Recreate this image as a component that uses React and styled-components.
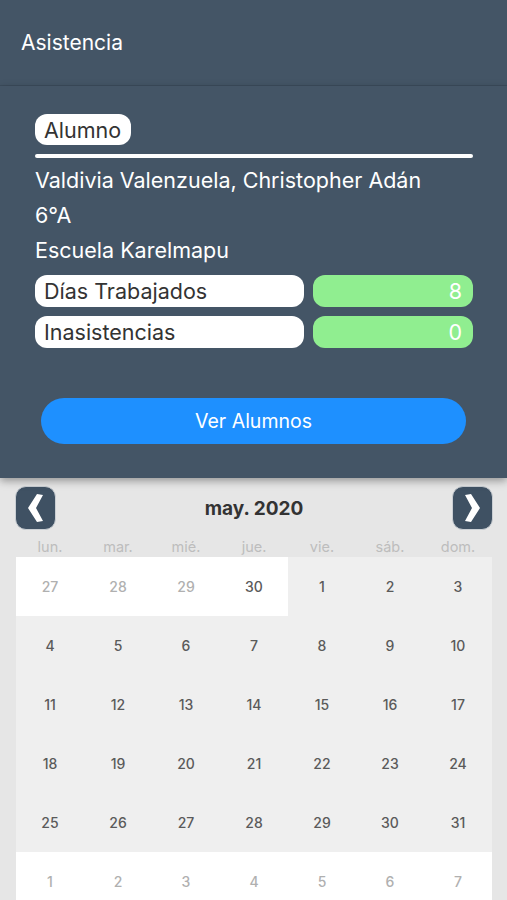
import React from "react";
import styled, { createGlobalStyle } from "styled-components";

const GlobalStyle = createGlobalStyle`
  html, body {
    margin: 0;
    padding: 0;
    background: #e6e6e6;
    font-family: Inter, "Noto Sans", "Liberation Sans", sans-serif;
  }
`;

const Page = styled.div`
  display: flex;
  flex-direction: column;
  width: 507px;
  height: 900px;
  overflow: hidden;
  & > * {
    flex-shrink: 0;
  }
`;

const TopBar = styled.header`
  height: 86px;
  display: flex;
  align-items: center;
  padding-left: 21px;
  background: #445566;
  border-bottom: 1px solid #3c4c5c;
  color: #ffffff;
  font-size: 21px;
  box-sizing: border-box;
`;

const Panel = styled.section`
  position: relative;
  z-index: 1;
  background: #445566;
  padding: 28px 34px 34px 35px;
  box-shadow: 0 3px 8px rgba(0, 0, 0, 0.35);
  display: flex;
  flex-direction: column;
`;

const Tag = styled.span`
  align-self: flex-start;
  height: 31px;
  display: flex;
  align-items: center;
  padding: 0 10px 0 9px;
  background: #ffffff;
  border-radius: 12px;
  color: #333333;
  font-size: 21.5px;
  box-sizing: border-box;
`;

const Rule = styled.div`
  height: 4px;
  margin-top: 9px;
  border-radius: 2px;
  background: #ffffff;
`;

const InfoList = styled.div`
  margin-top: 5px;
  display: flex;
  flex-direction: column;
`;

const InfoLine = styled.div`
  height: 35px;
  line-height: 35px;
  color: #ffffff;
  font-size: 21.5px;
`;

const Stats = styled.div`
  margin-top: 7px;
  display: flex;
  flex-direction: column;
  gap: 9px;
`;

const StatRow = styled.div`
  display: grid;
  grid-template-columns: 269px 160px;
  gap: 9px;
`;

const Pill = styled.div`
  height: 32px;
  display: flex;
  align-items: center;
  justify-content: ${(p) => (p.$value ? "flex-end" : "flex-start")};
  padding: ${(p) => (p.$value ? "0 11px 0 0" : "0 0 0 9px")};
  border-radius: 12px;
  background: ${(p) => (p.$value ? "#90ee90" : "#ffffff")};
  color: ${(p) => (p.$value ? "#ffffff" : "#333333")};
  font-size: 21.5px;
  box-sizing: border-box;
`;

const ActionButton = styled.button`
  margin: 50px 7px 0 6px;
  height: 46px;
  border: none;
  border-radius: 23px;
  background: #1e90ff;
  color: #ffffff;
  font-family: inherit;
  font-size: 19.5px;
`;

const Calendar = styled.section`
  flex: 1;
  padding: 8px 14px 0 15px;
  background: #e6e6e6;
  display: flex;
  flex-direction: column;
`;

const NavRow = styled.div`
  display: flex;
  align-items: center;
  justify-content: space-between;
`;

const NavButton = styled.button`
  width: 41px;
  height: 44px;
  padding: 0;
  display: flex;
  align-items: center;
  justify-content: center;
  background: #3f5163;
  border: 1px solid #c9ced3;
  border-radius: 11px;
  box-sizing: border-box;
`;

const MonthTitle = styled.div`
  color: #333333;
  font-size: 19px;
  font-weight: 700;
`;

const WeekDays = styled.div`
  display: grid;
  grid-template-columns: repeat(7, 68px);
  height: 27px;
  align-items: center;
  padding: 5px 0 0 1px;
  box-sizing: border-box;
`;

const WeekDay = styled.div`
  text-align: center;
  color: #bdbdbd;
  font-size: 14.5px;
`;

const DayGrid = styled.div`
  display: grid;
  grid-template-columns: repeat(7, 68px);
  grid-auto-rows: 59px;
  padding-left: 1px;
`;

const DayCell = styled.div`
  display: flex;
  align-items: center;
  justify-content: center;
  background: ${(p) => (p.$outside ? "#ffffff" : "#efefef")};
  color: ${(p) => (p.$muted ? "#b0b0b0" : "#5a5a5a")};
  font-size: 14px;
  font-weight: 500;
`;

const Chevron = ({ dir }) => (
  <svg width="15" height="28" viewBox="0 0 15 28">
    <polygon
      fill="#ffffff"
      points={
        dir === "left"
          ? "9,0 15,1 8,14 15,27 9,28 0,14"
          : "6,0 0,1 7,14 0,27 6,28 15,14"
      }
    />
  </svg>
);

const weekDays = ["lun.", "mar.", "mié.", "jue.", "vie.", "sáb.", "dom."];

const buildDays = () => {
  const days = [];
  [27, 28, 29].forEach((d) => days.push({ d, outside: true, muted: true }));
  days.push({ d: 30, outside: true, muted: false });
  for (let d = 1; d <= 31; d++) days.push({ d, outside: false, muted: false });
  for (let d = 1; d <= 7; d++) days.push({ d, outside: true, muted: true });
  return days;
};

export default function App() {
  const days = buildDays();

  return (
    <Page>
      <GlobalStyle />
      <TopBar>Asistencia</TopBar>
      <Panel>
        <Tag>Alumno</Tag>
        <Rule />
        <InfoList>
          <InfoLine>Valdivia Valenzuela, Christopher Adán</InfoLine>
          <InfoLine>6°A</InfoLine>
          <InfoLine>Escuela Karelmapu</InfoLine>
        </InfoList>
        <Stats>
          <StatRow>
            <Pill>Días Trabajados</Pill>
            <Pill $value>8</Pill>
          </StatRow>
          <StatRow>
            <Pill>Inasistencias</Pill>
            <Pill $value>0</Pill>
          </StatRow>
        </Stats>
        <ActionButton>Ver Alumnos</ActionButton>
      </Panel>
      <Calendar>
        <NavRow>
          <NavButton aria-label="Mes anterior">
            <Chevron dir="left" />
          </NavButton>
          <MonthTitle>may. 2020</MonthTitle>
          <NavButton aria-label="Mes siguiente">
            <Chevron dir="right" />
          </NavButton>
        </NavRow>
        <WeekDays>
          {weekDays.map((w) => (
            <WeekDay key={w}>{w}</WeekDay>
          ))}
        </WeekDays>
        <DayGrid>
          {days.map((day, i) => (
            <DayCell key={i} $outside={day.outside} $muted={day.muted}>
              {day.d}
            </DayCell>
          ))}
        </DayGrid>
      </Calendar>
    </Page>
  );
}
